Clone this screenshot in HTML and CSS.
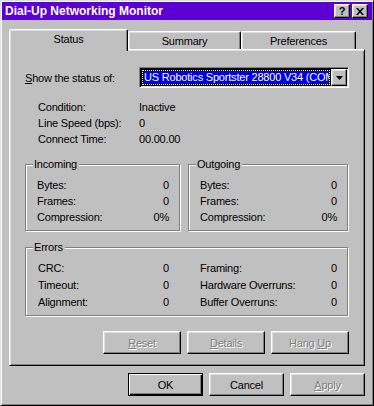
FILE: index.html
```html
<!DOCTYPE html>
<html lang="en">
<head>
    <meta charset="UTF-8">
    <meta name="viewport" content="width=device-width, initial-scale=1.0">
    <title>Dial-Up Networking Monitor</title>
    <link rel="stylesheet" href="styles.css">
</head>
<body>
    <div class="window">
        <div class="titlebar">
            <span class="title">Dial-Up Networking Monitor</span>
            <span class="tbtn help">?</span>
            <span class="tbtn">
                <svg width="8" height="7" viewBox="0 0 8 7"><path d="M0 0h2l2 2.5L6 0h2L5 3.5 8 7H6L4 4.5 2 7H0l3-3.5z" fill="#000"/></svg>
            </span>
        </div>

        <div class="sheet">
            <div class="tabs">
                <div class="tab active">Status</div>
                <div class="tab summary">Summary</div>
                <div class="tab prefs">Preferences</div>
            </div>

            <div class="panel">
                <div class="device-row">
                    <label class="device-label"><u>S</u>how the status of:</label>
                    <div class="combo">
                        <div class="combo-field">
                            <div class="combo-sel">US Robotics Sportster 28800 V34 (COM2)</div>
                        </div>
                        <span class="drop-btn">
                            <svg width="7" height="4" viewBox="0 0 7 4"><path d="M0 0h7L3.5 4z" fill="#000"/></svg>
                        </span>
                    </div>
                </div>

                <div class="info">
                    <span>Condition:</span><span>Inactive</span>
                    <span>Line Speed (bps):</span><span>0</span>
                    <span>Connect Time:</span><span>00.00.00</span>
                </div>

                <div class="groups">
                    <div class="group incoming">
                        <div class="group-title">Incoming</div>
                        <div class="stats">
                            <div class="stat"><span>Bytes:</span><span>0</span></div>
                            <div class="stat"><span>Frames:</span><span>0</span></div>
                            <div class="stat"><span>Compression:</span><span>0%</span></div>
                        </div>
                    </div>
                    <div class="group outgoing">
                        <div class="group-title">Outgoing</div>
                        <div class="stats">
                            <div class="stat"><span>Bytes:</span><span>0</span></div>
                            <div class="stat"><span>Frames:</span><span>0</span></div>
                            <div class="stat"><span>Compression:</span><span>0%</span></div>
                        </div>
                    </div>
                </div>

                <div class="group errors">
                    <div class="group-title">Errors</div>
                    <div class="stats err-grid">
                        <div class="stat"><span>CRC:</span><span>0</span></div>
                        <div class="stat"><span>Framing:</span><span>0</span></div>
                        <div class="stat"><span>Timeout:</span><span>0</span></div>
                        <div class="stat"><span>Hardware Overruns:</span><span>0</span></div>
                        <div class="stat"><span>Alignment:</span><span>0</span></div>
                        <div class="stat"><span>Buffer Overruns:</span><span>0</span></div>
                    </div>
                </div>

                <div class="panel-btns">
                    <button class="btn wide" disabled><u>R</u>eset</button>
                    <button class="btn wide" disabled><u>D</u>etails</button>
                    <button class="btn wide" disabled>Hang <u>U</u>p</button>
                </div>
            </div>

            <div class="dialog-btns">
                <button class="btn default">OK</button>
                <button class="btn">Cancel</button>
                <button class="btn" disabled><u>A</u>pply</button>
            </div>
        </div>
    </div>
</body>
</html>
```

FILE: styles.css
```css
body{
    margin: 0;
    background: #c0c0c0;
    font-family: "Liberation Sans", Arial, sans-serif;
    font-size: 11px;
    letter-spacing: -0.2px;
    color: #000;
}
.window{
    width: 374px;
    height: 406px;
    box-sizing: border-box;
    border: 1px solid;
    border-color: #dfdfdf #000 #000 #dfdfdf;
    box-shadow: inset 1px 1px #fff, inset -1px -1px #808080;
    padding: 1px;
    display: flex;
    flex-direction: column;
}
.titlebar{
    height: 18px;
    flex: none;
    background: #5c00d4;
    color: #fff;
    display: flex;
    align-items: center;
    gap: 2px;
    padding: 0 4px 0 3px;
}
.title{
    flex: 1;
    font-weight: bold;
    font-size: 12px;
    letter-spacing: 0;
}
.tbtn,.drop-btn{
    box-sizing: border-box;
    border: 1px solid;
    border-color: #fff #000 #000 #fff;
    box-shadow: inset -1px -1px #808080, inset 1px 1px #dfdfdf;
    background: #c0c0c0;
    display: flex;
    align-items: center;
    justify-content: center;
}
.tbtn{
    width: 16px;
    height: 14px;
}
.help{
    color: #000;
    font-weight: bold;
    font-size: 11px;
    line-height: 12px;
}
.sheet{
    flex: 1;
    padding: 9px 7px 0 7px;
    display: flex;
    flex-direction: column;
}
.tabs{
    display: flex;
    align-items: flex-end;
    height: 20px;
    position: relative;
    z-index: 1;
}
.tab{
    height: 18px;
    box-sizing: border-box;
    border: 1px solid;
    border-bottom: none;
    border-color: #fff #000 transparent #fff;
    border-radius: 2px 2px 0 0;
    box-shadow: inset -1px 0 #808080, inset 1px 1px #dfdfdf;
    text-align: center;
    line-height: 13px;
    padding-top: 3px;
}
.tab.active{
    width: 119px;
    height: 22px;
    margin-bottom: -2px;
    background: #c0c0c0;
}
.summary{
    width: 113px;
}
.prefs{
    width: 115px;
}
.panel{
    height: 317px;
    box-sizing: border-box;
    border: 1px solid;
    border-color: #fff #000 #000 #fff;
    box-shadow: inset 1px 1px #dfdfdf, inset -1px -1px #808080;
    padding: 17px 15px 0 15px;
}
.device-row{
    display: flex;
    align-items: center;
}
.device-label{
    width: 114px;
}
.combo{
    width: 210px;
    height: 21px;
    box-sizing: border-box;
    border: 1px solid;
    border-color: #808080 #fff #fff #808080;
    box-shadow: inset 1px 1px #000, inset -1px -1px #dfdfdf;
    padding: 1px;
    background: #fff;
    display: flex;
}
.combo-field{
    flex: 1;
    min-width: 0;
    background: #000;
    padding: 1px;
}
.combo-sel{
    height: 100%;
    box-sizing: border-box;
    border: 1px dotted #ff0;
    background: #0000f0;
    background-clip: padding-box;
    color: #fff;
    padding-left: 1px;
    line-height: 13px;
    white-space: nowrap;
    overflow: hidden;
}
.drop-btn{
    width: 16px;
    flex: none;
}
.info{
    display: grid;
    grid-template-columns: 101px auto;
    grid-auto-rows: 16px;
    align-items: center;
    margin-top: 11px;
    padding-left: 13px;
}
.groups{
    display: flex;
    gap: 8px;
    margin-top: 17px;
}
.group{
    box-sizing: border-box;
    border: 1px solid #808080;
    box-shadow: 1px 1px #fff, inset 1px 1px #fff;
}
.group-title{
    width: max-content;
    margin: -7px 0 0 7px;
    padding: 0 2px 0 1px;
    line-height: 13px;
    background: #c0c0c0;
}
.incoming{
    width: 155px;
    height: 67px;
}
.outgoing{
    width: 160px;
    height: 67px;
}
.stats{
    display: grid;
    grid-template-rows: 17px 16px 16px;
    align-items: center;
    margin-top: 5px;
    padding: 0 10px 0 11px;
}
.stat{
    display: flex;
    justify-content: space-between;
}
.errors{
    width: 323px;
    height: 69px;
    margin-top: 16px;
}
.err-grid{
    grid-template-columns: 131px 137px;
    grid-template-rows: 17px 17px 17px;
    column-gap: 31px;
    padding-left: 12px;
}
.panel-btns{
    display: flex;
    justify-content: flex-end;
    gap: 6px;
    margin-top: 15px;
}
.dialog-btns{
    display: flex;
    justify-content: flex-end;
    gap: 6px;
    margin-top: 7px;
}
.btn{
    width: 75px;
    height: 23px;
    box-sizing: border-box;
    border: 1px solid;
    border-color: #fff #000 #000 #fff;
    box-shadow: inset -1px -1px #808080, inset 1px 1px #dfdfdf;
    background: #c0c0c0;
    font: inherit;
    letter-spacing: inherit;
    color: #000;
    padding: 0;
}
.btn.wide{
    width: 78px;
}
.btn.default{
    border-color: #000;
    box-shadow: inset 1px 1px #fff, inset -1px -1px #000, inset -2px -2px #808080;
}
.btn:disabled{
    color: #808080;
    text-shadow: 1px 1px #fff;
}
```
